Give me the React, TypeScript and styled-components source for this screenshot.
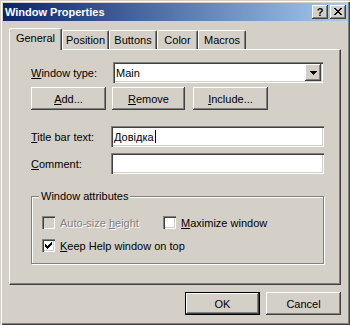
import React from "react";
import styled, { createGlobalStyle, css } from "styled-components";

const GlobalStyle = createGlobalStyle`
  html, body {
    margin: 0;
    padding: 0;
    background: #d4d0c8;
  }
  body {
    font-family: "Liberation Sans", Arial, sans-serif;
    font-size: 11px;
    color: #000;
  }
`;

const raised = css`
  box-shadow: inset -1px -1px 0 #404040, inset 1px 1px 0 #fff,
    inset -2px -2px 0 #808080, inset 2px 2px 0 #d4d0c8;
`;

const sunken = css`
  box-shadow: inset 1px 1px 0 #808080, inset 2px 2px 0 #404040,
    inset -1px -1px 0 #fff, inset -2px -2px 0 #d4d0c8;
`;

const Window = styled.div`
  width: 350px;
  height: 325px;
  box-sizing: border-box;
  padding: 3px 2px 2px 3px;
  background: #d4d0c8;
  box-shadow: inset 1px 1px 0 #d4d0c8, inset 2px 2px 0 #fff,
    inset -1px -1px 0 #404040, inset -2px -2px 0 #808080;
  display: flex;
  flex-direction: column;
`;

const TitleBar = styled.div`
  height: 18px;
  display: flex;
  align-items: center;
  padding-left: 2px;
  background: linear-gradient(90deg, #0a246a 0%, #a6caf0 100%);
  color: #fff;
  font-weight: bold;
  font-size: 11px;
`;

const TitleText = styled.span`
  flex: 1;
`;

const TitleButtons = styled.div`
  display: flex;
  gap: 2px;
  margin-right: 2px;
`;

const TitleButton = styled.div`
  width: 16px;
  height: 14px;
  box-sizing: border-box;
  background: #d4d0c8;
  ${raised};
  display: flex;
  align-items: center;
  justify-content: center;
  color: #000;
  font-weight: bold;
  font-size: 11px;
  line-height: 14px;
  padding-bottom: 1px;
`;

const Body = styled.div`
  display: flex;
  flex-direction: column;
  padding: 7px 0 0 6px;
`;

const TabStrip = styled.div`
  display: flex;
  align-items: flex-end;
  height: 21px;
  position: relative;
  z-index: 1;
`;

const Tab = styled.div<{ $w: number; $active?: boolean }>`
  width: ${(p) => p.$w}px;
  height: ${(p) => (p.$active ? 22 : 19)}px;
  margin-bottom: ${(p) => (p.$active ? -1 : 0)}px;
  box-sizing: border-box;
  background: #d4d0c8;
  border-left: 1px solid #fff;
  border-top: 1px solid #fff;
  border-right: 1px solid #404040;
  border-radius: 2px 2px 0 0;
  box-shadow: inset -1px 0 0 #808080;
  display: flex;
  align-items: center;
  justify-content: center;
  padding-bottom: ${(p) => (p.$active ? 3 : 1)}px;
`;

const Panel = styled.div`
  width: 332px;
  height: 236px;
  box-sizing: border-box;
  border-top: 1px solid #fff;
  border-left: 1px solid #fff;
  border-right: 1px solid #404040;
  border-bottom: 1px solid #404040;
  box-shadow: inset -1px -1px 0 #808080;
  padding: 12px 0 0 21px;
  display: flex;
  flex-direction: column;
`;

const Row = styled.div<{ $mt?: number }>`
  display: flex;
  align-items: center;
  height: 21px;
  margin-top: ${(p) => p.$mt ?? 0}px;
`;

const Label = styled.span<{ $w: number }>`
  width: ${(p) => p.$w}px;
`;

const Field = styled.div<{ $w: number }>`
  width: ${(p) => p.$w}px;
  height: 21px;
  box-sizing: border-box;
  background: #fff;
  ${sunken};
  display: flex;
  align-items: center;
  padding: 0 2px 0 3px;
`;

const Caret = styled.span`
  display: inline-block;
  width: 1px;
  height: 13px;
  background: #000;
  margin-left: 1px;
`;

const ComboButton = styled.div`
  margin-left: auto;
  width: 16px;
  height: 17px;
  box-sizing: border-box;
  background: #d4d0c8;
  ${raised};
  display: flex;
  align-items: center;
  justify-content: center;
`;

const ButtonRow = styled.div<{ $mt?: number }>`
  display: flex;
  margin-top: ${(p) => p.$mt ?? 0}px;
`;

const Btn = styled.div<{ $w: number; $ml?: number; $default?: boolean }>`
  width: ${(p) => p.$w}px;
  height: 23px;
  margin-left: ${(p) => p.$ml ?? 0}px;
  box-sizing: border-box;
  background: #d4d0c8;
  ${raised};
  ${(p) =>
    p.$default &&
    css`
      border: 1px solid #000;
    `}
  display: flex;
  align-items: center;
  justify-content: center;
`;

const Group = styled.div`
  position: relative;
  margin-top: 22px;
  width: 293px;
  height: 68px;
  box-sizing: border-box;
  border: 1px solid #808080;
  box-shadow: 1px 1px 0 #fff, inset 1px 1px 0 #fff;
  padding: 19px 0 0 10px;
`;

const Legend = styled.span`
  position: absolute;
  top: -7px;
  left: 7px;
  padding: 0 2px;
  background: #d4d0c8;
  line-height: 13px;
`;

const CheckRow = styled.div<{ $mt?: number }>`
  display: flex;
  align-items: center;
  height: 13px;
  margin-top: ${(p) => p.$mt ?? 0}px;
`;

const CheckItem = styled.div<{ $w?: number }>`
  display: flex;
  align-items: center;
  width: ${(p) => (p.$w ? `${p.$w}px` : "auto")};
`;

const Box = styled.div<{ $disabled?: boolean }>`
  width: 13px;
  height: 13px;
  box-sizing: border-box;
  background: ${(p) => (p.$disabled ? "#d4d0c8" : "#fff")};
  ${sunken};
  display: flex;
  align-items: center;
  justify-content: center;
`;

const CheckLabel = styled.span<{ $disabled?: boolean }>`
  margin-left: 5px;
  color: ${(p) => (p.$disabled ? "#808080" : "#000")};
  text-shadow: ${(p) => (p.$disabled ? "1px 1px 0 #fff" : "none")};
`;

const Footer = styled.div`
  display: flex;
  justify-content: flex-end;
  width: 332px;
  margin-top: 7px;
`;

const pixels = (rows: string[]) =>
  rows.flatMap((r, y) =>
    r.split("").map((c, x) =>
      c === "X" ? <rect key={`${x}-${y}`} x={x} y={y} width={1} height={1} /> : null
    )
  );

const CloseGlyph = () => (
  <svg width="8" height="7" viewBox="0 0 8 7" fill="#000" shapeRendering="crispEdges">
    {pixels(["XX....XX", ".XX..XX.", "..XXXX..", "...XX...", "..XXXX..", ".XX..XX.", "XX....XX"])}
  </svg>
);

const ArrowGlyph = () => (
  <svg width="7" height="4" viewBox="0 0 7 4" fill="#000" shapeRendering="crispEdges">
    {pixels(["XXXXXXX", ".XXXXX.", "..XXX..", "...X..."])}
  </svg>
);

const CheckGlyph = () => (
  <svg width="7" height="7" viewBox="0 0 7 7" fill="#000" shapeRendering="crispEdges">
    {pixels(["......X", ".....XX", "X...XXX", "XX.XXX.", "XXXXX..", ".XXX...", "..X...."])}
  </svg>
);

const Check: React.FC<{ checked?: boolean; disabled?: boolean; w?: number; children: React.ReactNode }> = ({
  checked,
  disabled,
  w,
  children,
}) => (
  <CheckItem $w={w}>
    <Box $disabled={disabled}>{checked && <CheckGlyph />}</Box>
    <CheckLabel $disabled={disabled}>{children}</CheckLabel>
  </CheckItem>
);

const tabs = [
  { name: "General", w: 53 },
  { name: "Position", w: 47 },
  { name: "Buttons", w: 48 },
  { name: "Color", w: 41 },
  { name: "Macros", w: 48 },
];

export default function App() {
  return (
    <>
      <GlobalStyle />
      <Window>
        <TitleBar>
          <TitleText>Window Properties</TitleText>
          <TitleButtons>
            <TitleButton>?</TitleButton>
            <TitleButton>
              <CloseGlyph />
            </TitleButton>
          </TitleButtons>
        </TitleBar>
        <Body>
          <TabStrip>
            {tabs.map((t, i) => (
              <Tab key={t.name} $w={t.w} $active={i === 0}>
                {t.name}
              </Tab>
            ))}
          </TabStrip>
          <Panel>
            <Row>
              <Label $w={82}>
                <u>W</u>indow type:
              </Label>
              <Field $w={210}>
                Main
                <ComboButton>
                  <ArrowGlyph />
                </ComboButton>
              </Field>
            </Row>
            <ButtonRow $mt={4}>
              <Btn $w={75}>
                <u>A</u>dd...
              </Btn>
              <Btn $w={73} $ml={6}>
                <u>R</u>emove
              </Btn>
              <Btn $w={75} $ml={8}>
                <u>I</u>nclude...
              </Btn>
            </ButtonRow>
            <Row $mt={16}>
              <Label $w={80}>
                <u>T</u>itle bar text:
              </Label>
              <Field $w={213}>
                Довідка
                <Caret />
              </Field>
            </Row>
            <Row $mt={6}>
              <Label $w={80}>
                <u>C</u>omment:
              </Label>
              <Field $w={213} />
            </Row>
            <Group>
              <Legend>Window attributes</Legend>
              <CheckRow>
                <Check disabled w={121}>
                  Auto-size <u>h</u>eight
                </Check>
                <Check>
                  <u>M</u>aximize window
                </Check>
              </CheckRow>
              <CheckRow $mt={10}>
                <Check checked>
                  <u>K</u>eep Help window on top
                </Check>
              </CheckRow>
            </Group>
          </Panel>
          <Footer>
            <Btn $w={75} $default>
              OK
            </Btn>
            <Btn $w={75} $ml={6}>
              Cancel
            </Btn>
          </Footer>
        </Body>
      </Window>
    </>
  );
}
